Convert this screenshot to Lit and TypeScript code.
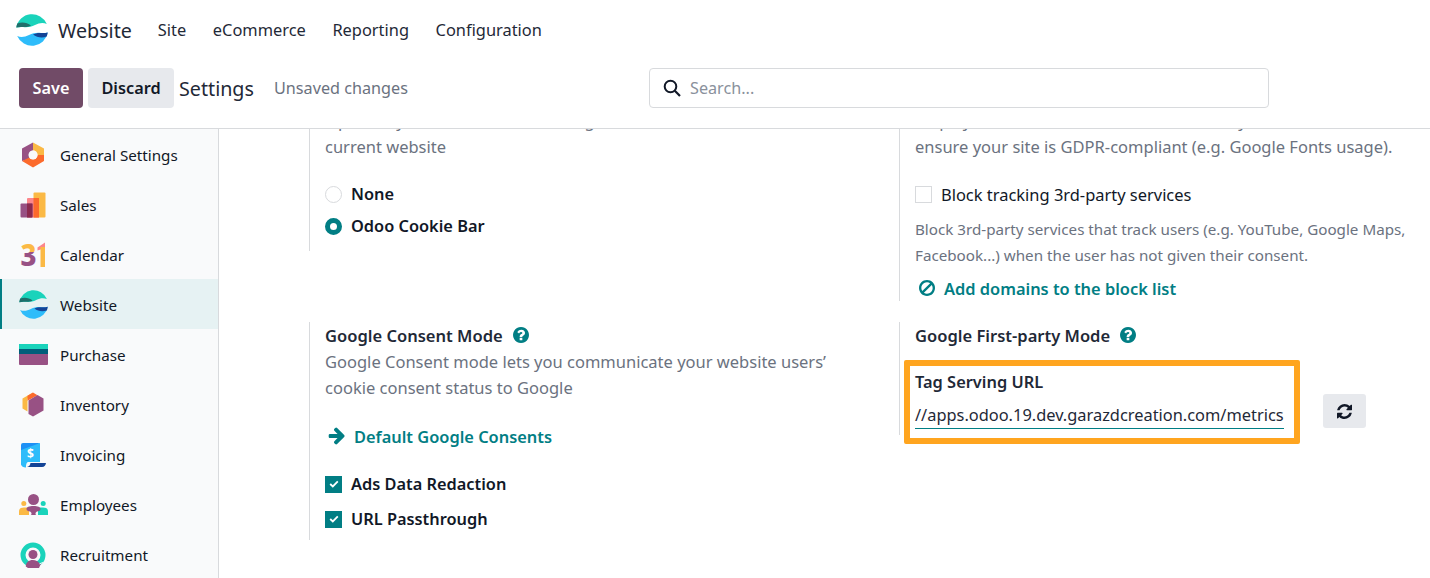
import { LitElement, html, css } from "lit";
import { customElement } from "lit/decorators.js";

const websiteIcon = (size: number) => html`<svg width=${size} height=${size} viewBox="0 0 32 32">
  <g>
    <path d="M.3 13.500A16 16 0 0 1 30.800 10C27 8.300 23 9 19 11c-4 2-8 2.500-12 2-2.500-.3-4.700 0-6.700.5z" fill="#1ad3bb"/>
    <path d="M1.300 9.500C6 7.800 11 8.500 15 11.500c-2.600 1.400-5.300 1.800-8 1.500-2.500-.3-4.700 0-6.700.5.100-1.400.5-2.800 1-4z" fill="#1f6f6b"/>
  </g>
  <g transform="rotate(180 16 16)">
    <path d="M.3 13.500A16 16 0 0 1 30.800 10C27 8.300 23 9 19 11c-4 2-8 2.500-12 2-2.500-.3-4.700 0-6.700.5z" fill="#2ebcfa"/>
    <path d="M1.300 9.500C6 7.800 11 8.500 15 11.500c-2.600 1.400-5.300 1.800-8 1.500-2.500-.3-4.700 0-6.700.5.100-1.400.5-2.800 1-4z" fill="#144496"/>
  </g>
</svg>`;

const icons: Record<string, unknown> = {
  general: html`<svg width="24" height="26" viewBox="0 0 24 26">
    <path d="M12 0.500 23 6.500V13H16.500A4.500 4.500 0 0 0 12 8.500z" fill="#fbb945"/>
    <path d="M12 .500 1 6.500V19l5.500-1.500L8.500 15.500A4.500 4.500 0 0 1 12 8.500z" fill="#985184"/>
    <path d="M1 19l11 6.500L23 19v-6h-6.500a4.500 4.500 0 0 1-8 2.500z" fill="#fc6a2c"/>
    <circle cx="12" cy="13" r="4.500" fill="#f9fafb"/>
  </svg>`,
  sales: html`<svg width="26" height="26" viewBox="0 0 26 26">
    <rect x="13.500" y="0.500" width="12" height="25" rx="1" fill="#fbb945"/>
    <rect x="7" y="6" width="12" height="19.500" rx="1" fill="#fc868b"/>
    <rect x="0.500" y="11.500" width="12" height="14" rx="1" fill="#985184"/>
    <rect x="7" y="11.500" width="5.500" height="14" fill="#8c2a4e"/>
    <rect x="13.500" y="6" width="5.500" height="19.500" fill="#fc6a2c"/>
  </svg>`,
  calendar: html`<svg width="28" height="26" viewBox="0 0 28 26">
    <defs>
      <linearGradient id="cal3" x1="0" y1="0" x2="0" y2="1">
        <stop offset="0.47" stop-color="#fbb945"/>
        <stop offset="0.47" stop-color="#985184"/>
      </linearGradient>
    </defs>
    <text x="1.500" y="23.500" font-family="Noto Sans" font-weight="800" font-size="31" textLength="16" lengthAdjust="spacingAndGlyphs" fill="url(#cal3)">3</text>
    <path d="M18.500 5.500 26 .500v5.500l-7.500 2.500z" fill="#fc868b"/>
    <path d="M21.500 5 26 5V25h-4.500z" fill="#fbb945"/>
  </svg>`,
  purchase: html`<svg width="29" height="21" viewBox="0 0 29 21">
    <rect width="29" height="5" y="0" fill="#1ad3bb"/>
    <rect width="29" height="5" y="5" fill="#005e7a"/>
    <path d="M0 10h29v10a1 1 0 0 1-1 1H1a1 1 0 0 1-1-1z" fill="#985184"/>
  </svg>`,
  inventory: html`<svg width="22" height="25" viewBox="0 0 22 25">
    <path d="M11 .500 .500 6.500v10l5 3V6.800z" fill="#fbb945"/>
    <path d="M11 .500 5.500 3.800v5l10-5.600z" fill="#fc6a2c"/>
    <path d="M15.500 3 21.500 6.500v12L11 24.500 6.500 22V8.500z" fill="#985184"/>
  </svg>`,
  invoicing: html`<svg width="26" height="26" viewBox="0 0 26 26">
    <path d="M1 3a2 2 0 0 1 2-2h15a2 2 0 0 1 2 2v17H6a5 5 0 0 0-2 4.800A4 4 0 0 1 1 21z" fill="#1e90f5"/>
    <path d="M1 20V8L20 1v19H8.500C7 20 6 21.500 6 25.500 3 25.500 1 24 1 21z" fill="#2ebcfa"/>
    <path d="M10.500 21H26c-.3 2-1.400 4-4 4H7c2-.3 3.200-2 3.500-4z" fill="#144496"/>
    <text x="10.500" y="16" text-anchor="middle" font-family="Open Sans" font-weight="700" font-size="12" fill="#fff">$</text>
  </svg>`,
  employees: html`<svg width="29" height="21" viewBox="0 0 29 21">
    <circle cx="14.500" cy="5.500" r="5.500" fill="#985184"/>
    <circle cx="4.800" cy="9.500" r="2.500" fill="#fbb945"/>
    <circle cx="24.200" cy="9.500" r="2.500" fill="#1ad3bb"/>
    <path d="M0 21v-3.500C0 14.500 2 13.500 5 13.500h5v7.500z" fill="#fbb945"/>
    <path d="M29 21v-3.500c0-3-2-4-5-4h-5v7.500z" fill="#1ad3bb"/>
    <path d="M7.500 15C7.500 13 10 12 14.500 12S21.500 13 21.500 15c0 2-2 2-3.500 2.500C16 18.500 16 21 18 21H11c2 0 2-2.500 0-3.500C9.500 17 7.500 17 7.500 15z" fill="#985184"/>
  </svg>`,
  recruitment: html`<svg width="26" height="26" viewBox="0 0 26 26">
    <circle cx="13" cy="13" r="10" fill="none" stroke="#1ad3bb" stroke-width="5"/>
    <circle cx="13" cy="12.500" r="4.500" fill="#985184"/>
    <path d="M5.800 24.500c0-4 3-6.500 7-6.500 3 0 5.500 1.400 6.700 3.600l1.500-.1-2 4.500H8z" fill="#985184"/>
    <path d="M19.500 21.800 23 20.500" stroke="#f9fafb" stroke-width="1"/>
  </svg>`,
};

const menu = [
  ["General Settings", "general"],
  ["Sales", "sales"],
  ["Calendar", "calendar"],
  ["Website", "website"],
  ["Purchase", "purchase"],
  ["Inventory", "inventory"],
  ["Invoicing", "invoicing"],
  ["Employees", "employees"],
  ["Recruitment", "recruitment"],
];

const helpIcon = html`<svg class="help" width="16" height="16" viewBox="0 128 1536 1536"><path fill="#017e84" d="M896 1376v-192q0-14-9-23t-23-9h-192q-14 0-23 9t-9 23v192q0 14 9 23t23 9h192q14 0 23-9t9-23zm256-672q0-88-55.500-163t-138.500-116-170-41q-243 0-371 213-15 24 8 42l132 100q7 6 19 6 16 0 25-12 53-68 86-92 34-24 86-24 48 0 85.500 26t37.500 59q0 38-20 61t-68 45q-63 28-115.500 86.500t-52.500 125.500v36q0 14 9 23t23 9h192q14 0 23-9t9-23q0-19 21.500-49.500t54.500-49.500q32-18 49-28.500t46-35 44.500-48 28-60.500 12.500-81zm384 192q0 209-103 385.500t-279.500 279.500-385.500 103-385.500-103-279.500-279.500-103-385.500 103-385.500 279.500-279.500 385.500-103 385.500 103 279.500 279.500 103 385.500z"/></svg>`;

const checkbox = html`<span class="check on"><svg width="10" height="8" viewBox="0 0 10 8"><path d="M1.200 4 3.800 6.400 8.800 1.400" fill="none" stroke="#fff" stroke-width="1.800"/></svg></span>`;

@customElement("app-root")
export class AppRoot extends LitElement {
  static styles = css`
    :host {
      display: block;
      width: 1430px;
      height: 578px;
      overflow: hidden;
      font-family: "Noto Sans", "Open Sans", sans-serif;
      font-size: 15.6px;
      color: #111827;
      background: #fff;
    }
    svg { overflow: visible; }
    .nav {
      height: 60px;
      display: flex;
      align-items: center;
      padding-left: 16px;
    }
    .brand {
      display: flex;
      align-items: center;
      gap: 10px;
      font-size: 19.700px;
      color: #1f2937;
      margin-right: 26px;
    }
    .nav a {
      margin: 0 26.600px 2px 0;
      font-size: 16.400px;
      color: #1f2937;
    }
    .panel {
      height: 69px;
      box-sizing: border-box;
      border-bottom: 1px solid #d8dadd;
      display: flex;
      align-items: flex-start;
      padding: 8px 0 0 19px;
    }
    .btn {
      height: 40px;
      border-radius: 4px;
      display: flex;
      align-items: center;
      justify-content: center;
      font-weight: 600;
      font-size: 16.300px;
      box-sizing: border-box;
    }
    .save {
      width: 64px;
      background: #714b67;
      color: #fff;
      margin-right: 5px;
    }
    .discard {
      width: 86px;
      background: #e7e9ed;
      color: #111827;
      margin-right: 5px;
    }
    .title {
      font-size: 19.700px;
      color: #1f2937;
      height: 40px;
      line-height: 42px;
      width: 95px;
    }
    .unsaved {
      font-size: 16.200px;
      color: #6b7280;
      height: 40px;
      line-height: 40px;
      width: 375px;
    }
    .search {
      width: 620px;
      height: 40px;
      box-sizing: border-box;
      border: 1px solid #d8dadd;
      border-radius: 4px;
      display: flex;
      align-items: center;
      gap: 9px;
      padding-left: 13px;
      color: #8a919c;
      font-size: 16.200px;
    }
    .body {
      display: flex;
      height: 449px;
    }
    .side {
      width: 219px;
      box-sizing: border-box;
      background: #f9fafb;
      border-right: 1px solid #d8dadd;
      flex: none;
    }
    .item {
      height: 50px;
      padding-top: 1px;
      display: flex;
      align-items: center;
      box-sizing: border-box;
      font-size: 15.200px;
    }
    .item.active {
      background: #e6f2f3;
      border-left: 2px solid #017e84;
    }
    .item .ic {
      width: 60px;
      display: flex;
      justify-content: center;
      flex: none;
      padding-left: 6px;
      box-sizing: border-box;
    }
    .item.active .ic {
      width: 58px;
      padding-left: 4px;
    }
    .main {
      flex: 1;
      overflow: hidden;
      padding-left: 90px;
    }
    .row {
      display: grid;
      grid-template-columns: 590px 590px;
      align-items: start;
    }
    .row1 {
      height: 172px;
      margin-bottom: 21px;
    }
    .cell {
      border-left: 1px solid #d8dadd;
      padding-left: 15px;
      box-sizing: border-box;
    }
    .l1 { height: 122px; }
    .r1 { height: 172px; }
    .l2 { height: 218px; }
    .r2 { height: 113px; }
    .muted {
      color: #6b7280;
      padding-top: 2px;
      line-height: 24px;
      font-size: 16.500px;
      white-space: nowrap;
    }
    .cut {
      margin-top: -22px;
    }
    .opt {
      display: flex;
      align-items: center;
      gap: 9px;
      height: 32px;
      font-size: 16.450px;
      color: #111827;
    }
    .strong {
      font-weight: 600;
      font-size: 16.350px;
    }
    .radio {
      width: 17px;
      height: 17px;
      border-radius: 50%;
      box-sizing: border-box;
      border: 1px solid #d8dadd;
      background: #fff;
      flex: none;
    }
    .radio.on {
      border: 5px solid #017e84;
    }
    .check {
      width: 17px;
      height: 17px;
      box-sizing: border-box;
      border: 1px solid #d8dadd;
      background: #fff;
      display: flex;
      align-items: center;
      justify-content: center;
      flex: none;
    }
    .check.on {
      background: #017e84;
      border-color: #017e84;
    }
    .small {
      font-size: 15.200px;
      color: #6b7280;
      line-height: 26px;
      white-space: nowrap;
    }
    .link {
      display: flex;
      align-items: center;
      gap: 9px;
      color: #017e84;
      font-weight: 600;
      font-size: 16.400px;
      padding-left: 4px;
      height: 26px;
    }
    .head {
      display: flex;
      align-items: center;
      gap: 10px;
      font-weight: 600;
      font-size: 16.550px;
      height: 26px;
      color: #1f2937;
    }
    .hl-row {
      display: flex;
      align-items: center;
      margin-left: -11px;
      margin-top: 12px;
    }
    .hl {
      width: 396px;
      height: 84px;
      box-sizing: border-box;
      border: 6px solid #ffa51f;
      border-radius: 2px;
      background: #fff;
      padding: 3px 0 0 5px;
      flex: none;
    }
    .hl label {
      display: block;
      font-weight: 600;
      font-size: 16.400px;
      line-height: 26px;
      color: #1f2937;
    }
    .url {
      width: 369px;
      font-size: 16.400px;
      line-height: 24px;
      margin-top: 8px;
      height: 26px;
      box-sizing: border-box;
      border-bottom: 1px solid #017e84;
      color: #1f2937;
      white-space: nowrap;
    }
    .refresh {
      width: 43px;
      height: 34px;
      margin: 18px 0 0 23px;
      background: #e7e9ed;
      border-radius: 3px;
      display: flex;
      align-items: center;
      justify-content: center;
    }
  `;

  render() {
    return html`
      <div class="nav">
        <div class="brand">${websiteIcon(32)}<span>Website</span></div>
        <a>Site</a><a>eCommerce</a><a>Reporting</a><a>Configuration</a>
      </div>
      <div class="panel">
        <div class="btn save">Save</div>
        <div class="btn discard">Discard</div>
        <div class="title">Settings</div>
        <div class="unsaved">Unsaved changes</div>
        <div class="search">
          <svg width="18" height="18" viewBox="0 0 18 18"><circle cx="7.500" cy="7.500" r="5.800" fill="none" stroke="#111827" stroke-width="2"/><path d="M11.800 11.800 17 17" stroke="#111827" stroke-width="2.200"/></svg>
          <span>Search...</span>
        </div>
      </div>
      <div class="body">
        <div class="side">
          ${menu.map(([label, key]) => html`
            <div class="item ${label === "Website" ? "active" : ""}">
              <span class="ic">${key === "website" ? websiteIcon(29) : icons[key]}</span>
              <span>${label}</span>
            </div>`)}
        </div>
        <div class="main">
          <div class="row row1">
            <div class="cell l1">
              <div class="muted cut">Optionally enable a cookie bar to get</div>
              <div class="muted">current website</div>
              <div style="height:19px"></div>
              <div class="opt"><span class="radio"></span><span class="strong">None</span></div>
              <div class="opt"><span class="radio on"></span><span class="strong">Odoo Cookie Bar</span></div>
            </div>
            <div class="cell r1">
              <div class="muted cut">Display a notice on all embedded media by</div>
              <div class="muted">ensure your site is GDPR-compliant (e.g. Google Fonts usage).</div>
              <div style="height:19px"></div>
              <div class="opt"><span class="check"></span><span>Block tracking 3rd-party services</span></div>
              <div style="height:6px"></div>
              <div class="small">Block 3rd-party services that track users (e.g. YouTube, Google Maps,</div>
              <div class="small">Facebook...) when the user has not given their consent.</div>
              <div style="height:7px"></div>
              <div class="link">
                <svg width="16" height="16" viewBox="0 128 1536 1536"><path fill="#017e84" d="M1312 893q0-161-87-295l-754 753q137 89 297 89 111 0 211.500-43.500t173.500-116.500 116-174.500 43-212.500zm-999 299l755-754q-135-91-300-91-148 0-273 73t-198 199-73 274q0 162 89 299zm1223-299q0 157-61 300t-163.500 246-245 164-298.500 61-298.500-61-245-164-163.500-246-61-300 61-299.500 163.500-245.500 245-164 298.500-61 298.500 61 245 164 163.500 245.500 61 299.500z"/></svg>
                <span>Add domains to the block list</span>
              </div>
            </div>
          </div>
          <div class="row">
            <div class="cell l2">
              <div class="head"><span>Google Consent Mode</span>${helpIcon}</div>
              <div class="muted">Google Consent mode lets you communicate your website users’</div>
              <div class="muted">cookie consent status to Google</div>
              <div style="height:23px"></div>
              <div class="link">
                <svg width="16" height="16" viewBox="60 218 1420 1484"><path fill="#017e84" d="M1472 960q0 54-37 91l-651 651q-39 37-91 37-51 0-90-37l-75-75q-38-38-38-91t38-91l293-293h-704q-52 0-84.500-37.500t-32.500-90.500v-128q0-53 32.500-90.500t84.500-37.500h704l-293-294q-38-36-38-90t38-90l75-75q38-38 90-38 53 0 91 38l651 651q37 35 37 90z"/></svg>
                <span>Default Google Consents</span>
              </div>
              <div style="height:19px"></div>
              <div class="opt">${checkbox}<span class="strong">Ads Data Redaction</span></div>
              <div style="height:3px"></div>
              <div class="opt">${checkbox}<span class="strong">URL Passthrough</span></div>
            </div>
            <div class="cell r2">
              <div class="head"><span>Google First-party Mode</span>${helpIcon}</div>
              <div class="hl-row">
                <div class="hl">
                  <label>Tag Serving URL</label>
                  <div class="url">//apps.odoo.19.dev.garazdcreation.com/metrics</div>
                </div>
                <div class="refresh">
                  <svg width="15" height="15" viewBox="0 128 1536 1536"><path fill="#111827" d="M1511 1056q0 5-1 7-64 268-268 434.500t-478 166.500q-146 0-282.500-55t-243.500-157l-129 129q-19 19-45 19t-45-19-19-45v-448q0-26 19-45t45-19h448q26 0 45 19t19 45-19 45l-137 137q71 66 161 102t187 36q134 0 250-65t186-179q11-17 53-117 8-23 30-23h192q13 0 22.500 9.500t9.500 22.500zm25-800v448q0 26-19 45t-45 19h-448q-26 0-45-19t-19-45 19-45l138-138q-148-137-349-137-134 0-250 65t-186 179q-11 17-53 117-8 23-30 23h-199q-13 0-22.500-9.500t-9.500-22.500v-7q65-268 270-434.500t480-166.500q146 0 284 55.500t245 156.500l130-129q19-19 45-19t45 19 19 45z"/></svg>
                </div>
              </div>
            </div>
          </div>
        </div>
      </div>
    `;
  }
}
